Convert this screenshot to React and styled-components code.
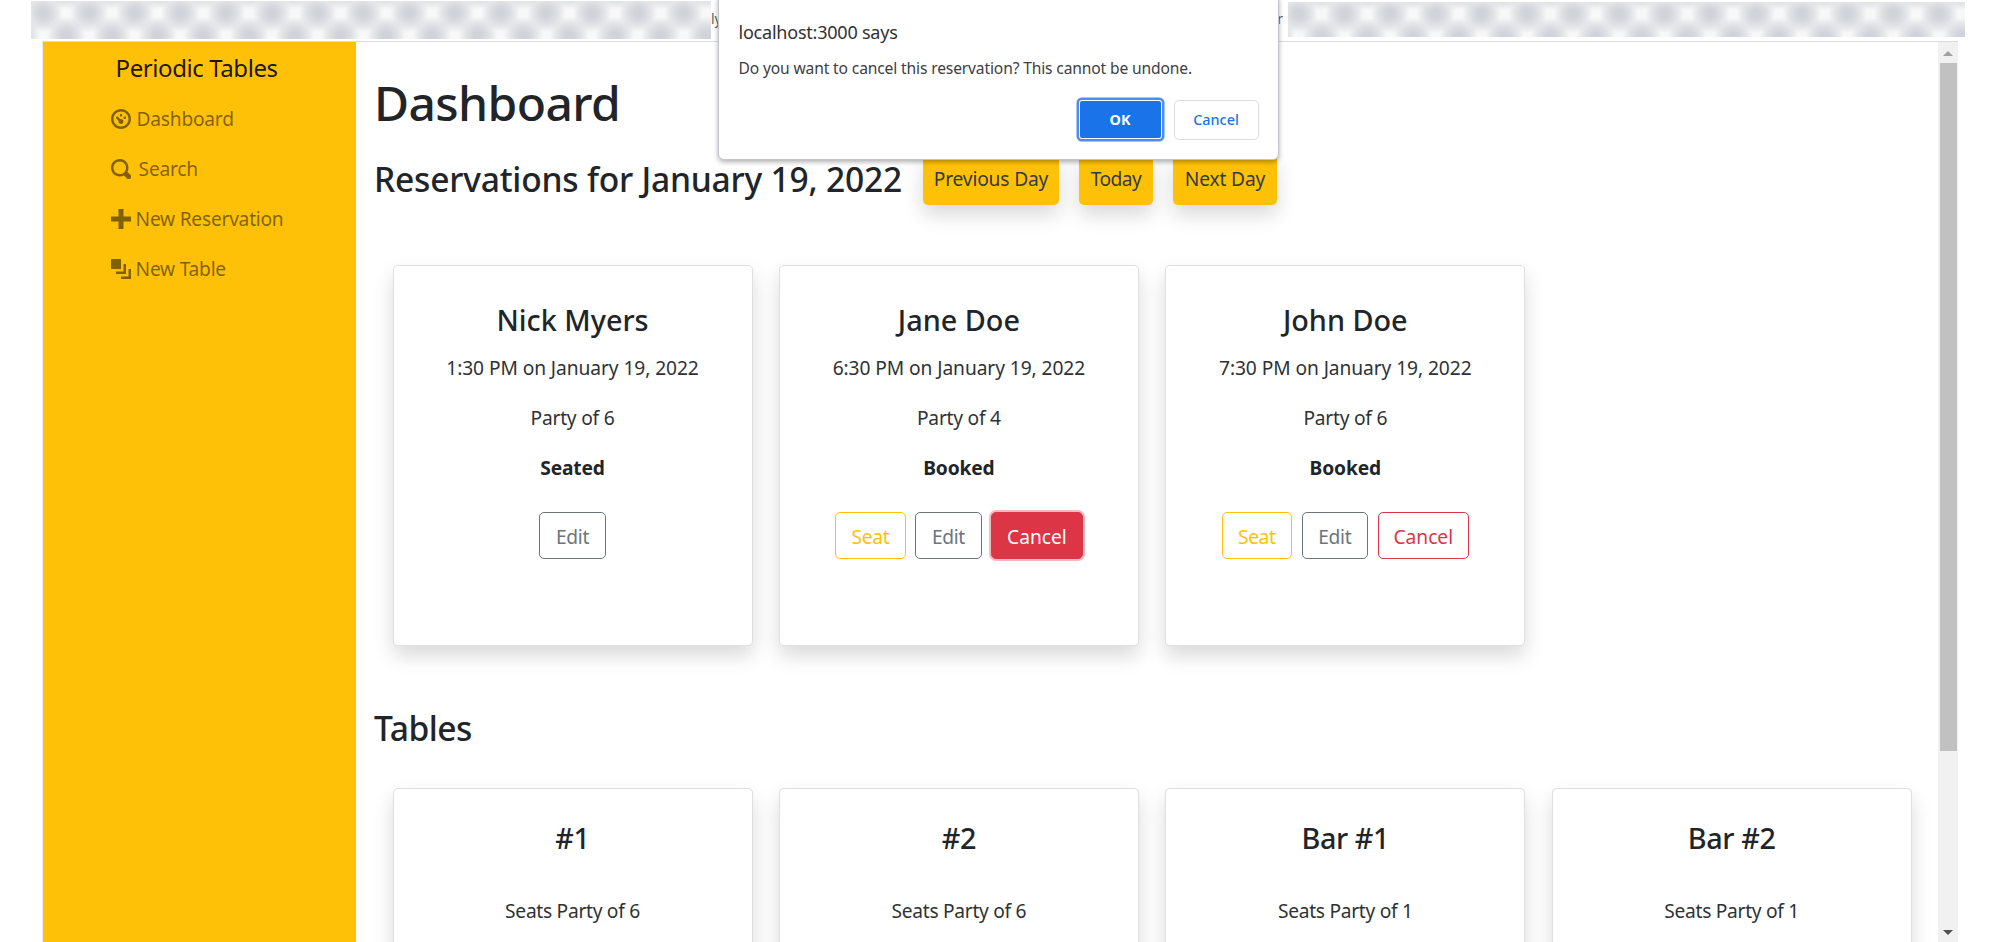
import React from "react";
import styled, { createGlobalStyle, css } from "styled-components";

const GlobalStyle = createGlobalStyle`
  *, *::before, *::after { box-sizing: border-box; }
  body {
    margin: 0;
    background: #fff;
    color: #212529;
    font-family: "Noto Sans", "Open Sans", sans-serif;
    font-size: 19.2px;
    line-height: 30px;
  }
  h1, h2, h3, p { margin: 0; }
`;

const Screen = styled.div`
  position: relative;
  width: 1995px;
  height: 942px;
  overflow: hidden;
  display: flex;
  flex-direction: column;
`;

const BookmarksBar = styled.header`
  flex: none;
  height: 41px;
  padding: 1px 30px 0 31px;
  display: flex;
  align-items: flex-start;
`;

const RedactedStrip = styled.div`
  width: ${(p) => p.$width}px;
  height: ${(p) => p.$height}px;
  margin-top: ${(p) => p.$top || 0}px;
  background-color: #e5e7ea;
  background-image:
    radial-gradient(circle closest-side, #d0d3d9 15%, rgba(208, 211, 217, 0) 85%),
    radial-gradient(circle closest-side, #d0d3d9 15%, rgba(208, 211, 217, 0) 85%),
    radial-gradient(circle closest-side, #f8f8f8 20%, rgba(248, 248, 248, 0) 90%),
    radial-gradient(circle closest-side, #f8f8f8 20%, rgba(248, 248, 248, 0) 90%);
  background-size: 45.74px 45.74px;
  background-position: ${({ $x }) =>
    `${$x - 22.87}px -11px, ${$x}px 12px, ${$x}px -11px, ${$x - 22.87}px 12px`};
`;

const BookmarkText = styled.span`
  flex: ${(p) => (p.$grow ? "1" : "none")};
  padding: ${(p) => (p.$end ? "0 5px 0 0" : "0")};
  text-align: ${(p) => (p.$end ? "right" : "left")};
  font-size: 14px;
  line-height: 36px;
  color: #5f6368;
`;

const Viewport = styled.div`
  flex: 1;
  min-height: 0;
  margin: 0 37px 0 42px;
  border-top: 1px solid #dadce0;
  border-left: 1px solid #e9e9ec;
  display: flex;
`;

const Sidebar = styled.nav`
  flex: none;
  width: 312.5px;
  background: #ffc107;
  padding: 10px 0 0 67.6px;
`;

const Brand = styled.div`
  padding-left: 5px;
  font-size: 24px;
  line-height: 32px;
  letter-spacing: -0.41px;
  color: rgba(0, 0, 0, 0.9);
`;

const NavLink = styled.a`
  display: flex;
  align-items: center;
  height: 30px;
  margin-top: 20px;
  letter-spacing: -0.25px;
  color: rgba(0, 0, 0, 0.5);

  svg {
    width: 20px;
    height: 20px;
    margin-right: ${(p) => p.$gap || 5}px;
    fill: currentColor;
  }
`;

const Main = styled.main`
  flex: 1;
  min-width: 0;
  padding: 31px 0 0 18.5px;
  overflow: hidden;
`;

const PageTitle = styled.h1`
  font-size: 48px;
  font-weight: 500;
  line-height: 60px;
  letter-spacing: -0.6px;
`;

const DayRow = styled.div`
  display: flex;
  align-items: center;
  height: 51px;
  margin: 21px 0 60px;
`;

const SectionTitle = styled.h2`
  font-size: 33.6px;
  font-weight: 500;
  line-height: 42px;
  margin-top: ${(p) => p.$lift || 0}px;
  letter-spacing: ${(p) => p.$spacing}px;
`;

const DayLink = styled.a`
  width: ${(p) => p.$width}px;
  height: 51px;
  margin-left: ${(p) => p.$gap}px;
  padding-top: 10px;
  border-radius: 5px;
  background: #ffc107;
  box-shadow: 0 10px 20px rgba(0, 0, 0, 0.15);
  color: #343a40;
  text-align: center;
  letter-spacing: ${(p) => p.$spacing || -0.17}px;
`;

const CardGrid = styled.div`
  display: grid;
  grid-template-columns: repeat(4, 360px);
  column-gap: 26.4px;
  padding-left: 18.5px;
`;

const Card = styled.article`
  height: 381px;
  padding-top: ${(p) => (p.$table ? 31 : 36)}px;
  border: 1px solid rgba(0, 0, 0, 0.125);
  border-radius: 5px;
  background: #fff;
  box-shadow: 0 10px 20px rgba(0, 0, 0, 0.15);
  text-align: center;
`;

const CardTitle = styled.h3`
  font-size: 28.8px;
  font-weight: 500;
  line-height: 36px;
  margin-bottom: ${(p) => (p.$table ? 40 : 15)}px;
  letter-spacing: ${(p) => (p.$table ? -0.4 : 0)}px;
`;

const CardLine = styled.p`
  margin-bottom: 20px;
  letter-spacing: ${(p) => p.$spacing || -0.08}px;
  color: #2e3236;
`;

const Status = styled.p`
  font-weight: 700;
  letter-spacing: -0.15px;
  margin-bottom: 29px;
`;

const Actions = styled.div`
  display: flex;
  justify-content: center;
  gap: 9.5px;
`;

const tones = { seat: "#ffc107", edit: "#6c757d", cancel: "#dc3545" };
const widths = { seat: 70.5, edit: 66.5, cancel: 91.5 };

const ActionButton = styled.button`
  width: ${(p) => widths[p.$tone]}px;
  height: 47px;
  padding: 2px 0 0;
  border: 1px solid ${(p) => tones[p.$tone]};
  border-radius: 5px;
  background: transparent;
  color: ${(p) => tones[p.$tone]};
  font: inherit;
  line-height: 30px;
  letter-spacing: ${(p) => (p.$tone === "cancel" ? 0 : -0.35)}px;
  ${(p) =>
    p.$active &&
    css`
      background: #dc3545;
      color: #fff;
      box-shadow: 0 0 0 2px rgba(225, 83, 97, 0.4);
    `}
`;

const TablesHeading = styled.div`
  margin: 61px 0 39px;
`;

const Scrollbar = styled.div`
  flex: none;
  width: 20px;
  background: #f1f1f1;
  display: flex;
  flex-direction: column;
  align-items: center;
`;

const Thumb = styled.div`
  width: 17px;
  height: 688px;
  background: #c1c1c1;
`;

const ScrollArrow = styled.svg`
  display: block;
  width: 10px;
  height: 5px;
  margin: ${(p) => p.$margin};
  fill: ${(p) => p.$color};
`;

const Track = styled.div`
  flex: 1;
`;

const Dialog = styled.div`
  position: absolute;
  left: 718px;
  top: -6px;
  width: 561px;
  height: 166px;
  padding: 24px 19.5px 0 19.5px;
  border: 1px solid #c3c6ca;
  border-radius: 6px;
  background: #fff;
  box-shadow: 0 2px 5px rgba(0, 0, 0, 0.32);
`;

const DialogTitle = styled.p`
  font-size: 18px;
  line-height: 26px;
  letter-spacing: -0.22px;
  color: #303134;
`;

const DialogText = styled.p`
  margin-top: 11px;
  font-size: 15.6px;
  line-height: 24px;
  letter-spacing: -0.14px;
  color: #3c4043;
`;

const DialogButtons = styled.div`
  display: flex;
  justify-content: flex-end;
  gap: 12px;
  margin-top: 20px;
`;

const DialogButton = styled.button`
  width: ${(p) => (p.$primary ? 81 : 85)}px;
  height: ${(p) => (p.$primary ? 37 : 40)}px;
  padding: 0 0 1px;
  border: 1px solid #dadce0;
  border-radius: 5px;
  background: #fff;
  color: #1a73e8;
  font: 500 14.4px "Noto Sans", sans-serif;
  ${(p) =>
    p.$primary &&
    css`
      margin: 1px 1px 0 0;
      border: none;
      border-radius: 2px;
      background: #1a73e8;
      color: #fff;
      font-weight: 700;
      box-shadow: 0 0 0 1px #fff, 0 0 0 3.5px #4a8ff0;
    `}
`;

const icons = {
  dashboard:
    "M4 0c-2.2 0-4 1.8-4 4s1.8 4 4 4 4-1.8 4-4-1.8-4-4-4zm0 1c1.66 0 3 1.34 3 3s-1.34 3-3 3-3-1.34-3-3 1.34-3 3-3zm0 1c-.28 0-.5.22-.5.5s.22.5.5.5.5-.22.5-.5-.22-.5-.5-.5zm-1.66 1a.5.5 0 0 0-.19.84l.91.91c-.02.08-.06.16-.06.25 0 .55.45 1 1 1s1-.45 1-1-.45-1-1-1c-.09 0-.17.04-.25.06l-.91-.91a.5.5 0 0 0-.44-.16.5.5 0 0 0-.06 0zm3.16 0c-.28 0-.5.22-.5.5s.22.5.5.5.5-.22.5-.5-.22-.5-.5-.5z",
  search:
    "M3.5 0c-1.93 0-3.5 1.57-3.5 3.5s1.57 3.5 3.5 3.5c.59 0 1.17-.14 1.66-.41a1 1 0 0 0 .13.13l1 1a1.02 1.02 0 1 0 1.44-1.44l-1-1a1 1 0 0 0-.16-.13c.27-.49.44-1.06.44-1.66 0-1.93-1.55-3.5-3.5-3.5zm0 1c1.39 0 2.5 1.11 2.5 2.5 0 .66-.24 1.27-.66 1.72-.01.01-.02.02-.03.03a1 1 0 0 0-.13.13c-.44.4-1.04.63-1.69.63-1.39 0-2.5-1.11-2.5-2.5s1.11-2.5 2.5-2.5z",
  plus: "M3 0v3h-3v2h3v3h2v-3h3v-2h-3v-3h-2z",
  layers: "M0 0v4h4v-4h-4zm5 2v3h-3v1h4v-4h-1zm2 2v3h-3v1h4v-4h-1z",
};

const Icon = ({ name }) => (
  <svg viewBox="0 0 8 8" aria-hidden="true">
    <path d={icons[name]} />
  </svg>
);

const reservations = [
  { name: "Nick Myers", time: "1:30 PM", party: 6, status: "Seated" },
  { name: "Jane Doe", time: "6:30 PM", party: 4, status: "Booked", cancelling: true },
  { name: "John Doe", time: "7:30 PM", party: 6, status: "Booked" },
];

const tables = [
  { name: "#1", seats: 6 },
  { name: "#2", seats: 6 },
  { name: "Bar #1", seats: 1 },
  { name: "Bar #2", seats: 1 },
];

export default function App() {
  return (
    <>
      <GlobalStyle />
      <Screen>
        <BookmarksBar>
          <RedactedStrip $width={680} $height={37.5} $x={12.3} />
          <BookmarkText $grow>ly</BookmarkText>
          <BookmarkText $end>r</BookmarkText>
          <RedactedStrip $width={677} $height={35} $top={0.5} $x={10.7} />
        </BookmarksBar>

        <Viewport>
          <Sidebar>
            <Brand>Periodic Tables</Brand>
            <NavLink $gap={6}><Icon name="dashboard" />Dashboard</NavLink>
            <NavLink $gap={8}><Icon name="search" />Search</NavLink>
            <NavLink><Icon name="plus" />New Reservation</NavLink>
            <NavLink><Icon name="layers" />New Table</NavLink>
          </Sidebar>

          <Main>
            <PageTitle>Dashboard</PageTitle>
            <DayRow>
              <SectionTitle $spacing={-0.22} $lift={-2}>Reservations for January 19, 2022</SectionTitle>
              <DayLink $width={136} $gap={21}>Previous Day</DayLink>
              <DayLink $width={74} $gap={20} $spacing={-0.6}>Today</DayLink>
              <DayLink $width={104} $gap={20}>Next Day</DayLink>
            </DayRow>

            <CardGrid>
              {reservations.map((r) => (
                <Card key={r.name}>
                  <CardTitle>{r.name}</CardTitle>
                  <CardLine>{r.time} on January 19, 2022</CardLine>
                  <CardLine $spacing={-0.24}>Party of {r.party}</CardLine>
                  <Status>{r.status}</Status>
                  <Actions>
                    {r.status === "Booked" && <ActionButton $tone="seat">Seat</ActionButton>}
                    <ActionButton $tone="edit">Edit</ActionButton>
                    {r.status === "Booked" && (
                      <ActionButton $tone="cancel" $active={r.cancelling}>Cancel</ActionButton>
                    )}
                  </Actions>
                </Card>
              ))}
            </CardGrid>

            <TablesHeading>
              <SectionTitle $spacing={-0.5}>Tables</SectionTitle>
            </TablesHeading>
            <CardGrid>
              {tables.map((t) => (
                <Card key={t.name} $table>
                  <CardTitle $table>{t.name}</CardTitle>
                  <CardLine $spacing={-0.29}>Seats Party of {t.seats}</CardLine>
                </Card>
              ))}
            </CardGrid>
          </Main>

          <Scrollbar>
            <ScrollArrow viewBox="0 0 10 5" $margin="9px 0 7px" $color="#a0a0a0">
              <path d="M0 5L5 0L10 5Z" />
            </ScrollArrow>
            <Thumb />
            <Track />
            <ScrollArrow viewBox="0 0 10 5" $margin="0 0 7px" $color="#505050">
              <path d="M0 0L5 5L10 0Z" />
            </ScrollArrow>
          </Scrollbar>
        </Viewport>

        <Dialog role="dialog">
          <DialogTitle>localhost:3000 says</DialogTitle>
          <DialogText>Do you want to cancel this reservation? This cannot be undone.</DialogText>
          <DialogButtons>
            <DialogButton $primary>OK</DialogButton>
            <DialogButton>Cancel</DialogButton>
          </DialogButtons>
        </Dialog>
      </Screen>
    </>
  );
}
